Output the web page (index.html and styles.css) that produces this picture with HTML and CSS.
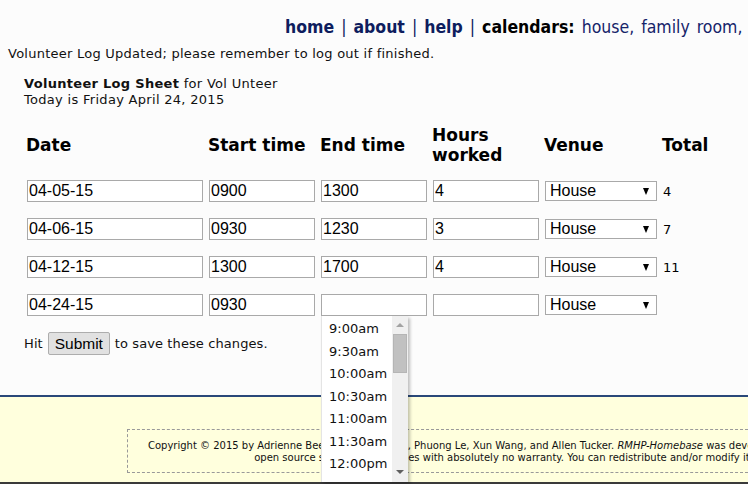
FILE: index.html
```html
<!DOCTYPE html>
<html>
<head>
<meta charset="utf-8">
<title>Volunteer Log Sheet</title>
<link rel="stylesheet" href="styles.css">
</head>
<body>
<div class="page">
  <div class="nav">
    <a class="nav-link">home</a> <span class="sep">|</span>
    <a class="nav-link">about</a> <span class="sep">|</span>
    <a class="nav-link">help</a> <span class="sep">|</span>
    <span class="nav-label">calendars:</span>
    <span class="nav-cal">house, family room,</span>
  </div>

  <p class="status">Volunteer Log Updated; please remember to log out if finished.</p>

  <div class="content">
    <div class="sheet-title">
      <b>Volunteer Log Sheet</b> for Vol Unteer<br>
      Today is Friday April 24, 2015
    </div>

    <form class="log">
      <div class="th">Date</div>
      <div class="th">Start time</div>
      <div class="th">End time</div>
      <div class="th">Hours worked</div>
      <div class="th">Venue</div>
      <div class="th">Total</div>

      <input class="field" value="04-05-15">
      <input class="field" value="0900">
      <input class="field" value="1300">
      <input class="field" value="4">
      <span class="select-wrap"><select class="venue"><option>House</option></select></span>
      <span class="total">4</span>

      <input class="field" value="04-06-15">
      <input class="field" value="0930">
      <input class="field" value="1230">
      <input class="field" value="3">
      <span class="select-wrap"><select class="venue"><option>House</option></select></span>
      <span class="total">7</span>

      <input class="field" value="04-12-15">
      <input class="field" value="1300">
      <input class="field" value="1700">
      <input class="field" value="4">
      <span class="select-wrap"><select class="venue"><option>House</option></select></span>
      <span class="total">11</span>

      <input class="field" value="04-24-15">
      <input class="field" value="0930">
      <input class="field" value="">
      <input class="field" value="">
      <span class="select-wrap"><select class="venue"><option>House</option></select></span>
      <span class="total"></span>
    </form>

    <p class="submit-line">Hit <button class="submit" type="button">Submit</button> to save these changes.</p>
  </div>

  <footer class="footer">
    <div class="credits">
      <div class="credits-inner">
        Copyright © 2015 by Adrienne Beeson, Nick Rogers, Phuong Le, Xun Wang, and Allen Tucker. <i>RMHP-Homebase</i> was developed for the Ronald McDonald House in Portland. It is free and<br>
        open source software and comes with absolutely no warranty. You can redistribute and/or modify it under the GNU General Public License v2.
      </div>
    </div>
  </footer>
</div>

<div class="dropdown">
  <ul class="options">
    <li>9:00am</li>
    <li>9:30am</li>
    <li>10:00am</li>
    <li>10:30am</li>
    <li>11:00am</li>
    <li>11:30am</li>
    <li>12:00pm</li>
  </ul>
  <div class="scrollbar">
    <span class="arrow-up"></span>
    <span class="thumb"></span>
    <span class="arrow-down"></span>
  </div>
</div>
</body>
</html>
```

FILE: styles.css
```css
html, body {
  margin: 0;
  padding: 0;
  overflow: hidden;
  height: 484px;
}
body {
  background: #fcfcfc;
  font-family: "DejaVu Sans", sans-serif;
  color: #111;
  position: relative;
}
.page {
  width: 748px;
}
.nav {
  margin: 0;
  padding: 17px 0 0 285px;
  font-family: "DejaVu Sans Condensed", "DejaVu Sans", sans-serif;
  font-size: 17.5px;
  line-height: 20px;
  word-spacing: 2px;
  white-space: nowrap;
  color: #0e1d5e;
}
.nav-link {
  font-weight: bold;
  color: #0e1d5e;
}
.sep {
  color: #0e1d5e;
}
.nav-label {
  font-weight: bold;
  color: #000;
}
.nav-cal {
  color: #16246a;
}
.status {
  margin: 9px 0 0 8px;
  font-size: 13px;
  line-height: 16px;
  letter-spacing: 0.25px;
}
.content {
  padding: 14px 0 40px 24px;
}
.sheet-title {
  font-size: 13px;
  line-height: 16px;
  letter-spacing: 0.3px;
}
.log {
  margin: 16px 0 0 3px;
  display: grid;
  grid-template-columns: 176px 106px 106px 106px 112px auto;
  column-gap: 6px;
  row-gap: 16px;
  align-items: center;
}
.th {
  margin-left: -1px;
  font-weight: bold;
  font-size: 17px;
  line-height: 20px;
  color: #000;
  position: relative;
  top: 1px;
}
.field {
  box-sizing: border-box;
  width: 100%;
  height: 22px;
  margin: 0;
  padding: 0 1px;
  border: 1px solid #a9a9a9;
  background: #fff;
  font-family: "Liberation Sans", Arial, sans-serif;
  font-size: 16px;
  color: #000;
  outline: none;
}
.select-wrap {
  position: relative;
  display: block;
  width: 112px;
  height: 20px;
}
.venue {
  appearance: none;
  -webkit-appearance: none;
  box-sizing: border-box;
  display: block;
  width: 112px;
  height: 20px;
  margin: 0;
  padding: 0 0 0 4px;
  border: 1px solid #a9a9a9;
  border-radius: 0;
  background: #fff;
  font-family: "Liberation Sans", Arial, sans-serif;
  font-size: 16px;
  line-height: 18px;
  color: #000;
}
.select-wrap::after {
  content: "";
  position: absolute;
  right: 8px;
  top: 7px;
  border-left: 3.5px solid transparent;
  border-right: 3.5px solid transparent;
  border-top: 7px solid #000;
  pointer-events: none;
}
.total {
  font-size: 13px;
  color: #000;
}
.submit-line {
  margin: 16px 0 0 0;
  font-size: 13px;
  line-height: 23px;
  letter-spacing: 0.1px;
  display: flex;
  align-items: center;
  gap: 5px;
}
.submit {
  box-sizing: border-box;
  height: 23px;
  width: 62px;
  margin: 0;
  padding: 0;
  border: 1px solid #adadad;
  border-radius: 2px;
  background: #e1e1e1;
  font-family: "Liberation Sans", Arial, sans-serif;
  font-size: 15.5px;
  color: #000;
}
.footer {
  border-top: 2px solid #2a4879;
  border-bottom: 2px solid #3a3a3a;
  background: #ffffdd;
  padding: 32px 0 9px 127px;
}
.credits {
  border: 1px dashed #999;
  border-right: none;
  padding: 10px 0 8px 20px;
  font-size: 10px;
  line-height: 12px;
  color: #111;
  white-space: nowrap;
}
.credits-inner {
  display: inline-block;
  text-align: center;
}
.dropdown {
  position: absolute;
  left: 321px;
  top: 316px;
  width: 87px;
  height: 166px;
  background: #fff;
  box-shadow: 2px 2px 3px rgba(0, 0, 0, 0.25);
  border-left: 1px solid #e4e4e4;
  box-sizing: border-box;
  display: flex;
}
.options {
  list-style: none;
  margin: 0;
  padding: 2px 0 0 7px;
  flex: 1;
  font-size: 13px;
  color: #111;
}
.options li {
  height: 22.5px;
  line-height: 22.5px;
  white-space: nowrap;
  overflow: hidden;
}
.scrollbar {
  position: relative;
  width: 16px;
  height: 166px;
  background: #f0f0f0;
}
.arrow-up {
  position: absolute;
  left: 4px;
  top: 7px;
  border-left: 4px solid transparent;
  border-right: 4px solid transparent;
  border-bottom: 4px solid #a3a3a3;
}
.thumb {
  position: absolute;
  left: 1px;
  top: 18px;
  width: 12px;
  height: 37px;
  background: #c1c1c1;
  border: 1px solid #b5b5b5;
}
.arrow-down {
  position: absolute;
  left: 4px;
  top: 154px;
  border-left: 4px solid transparent;
  border-right: 4px solid transparent;
  border-top: 4px solid #606060;
}
```
